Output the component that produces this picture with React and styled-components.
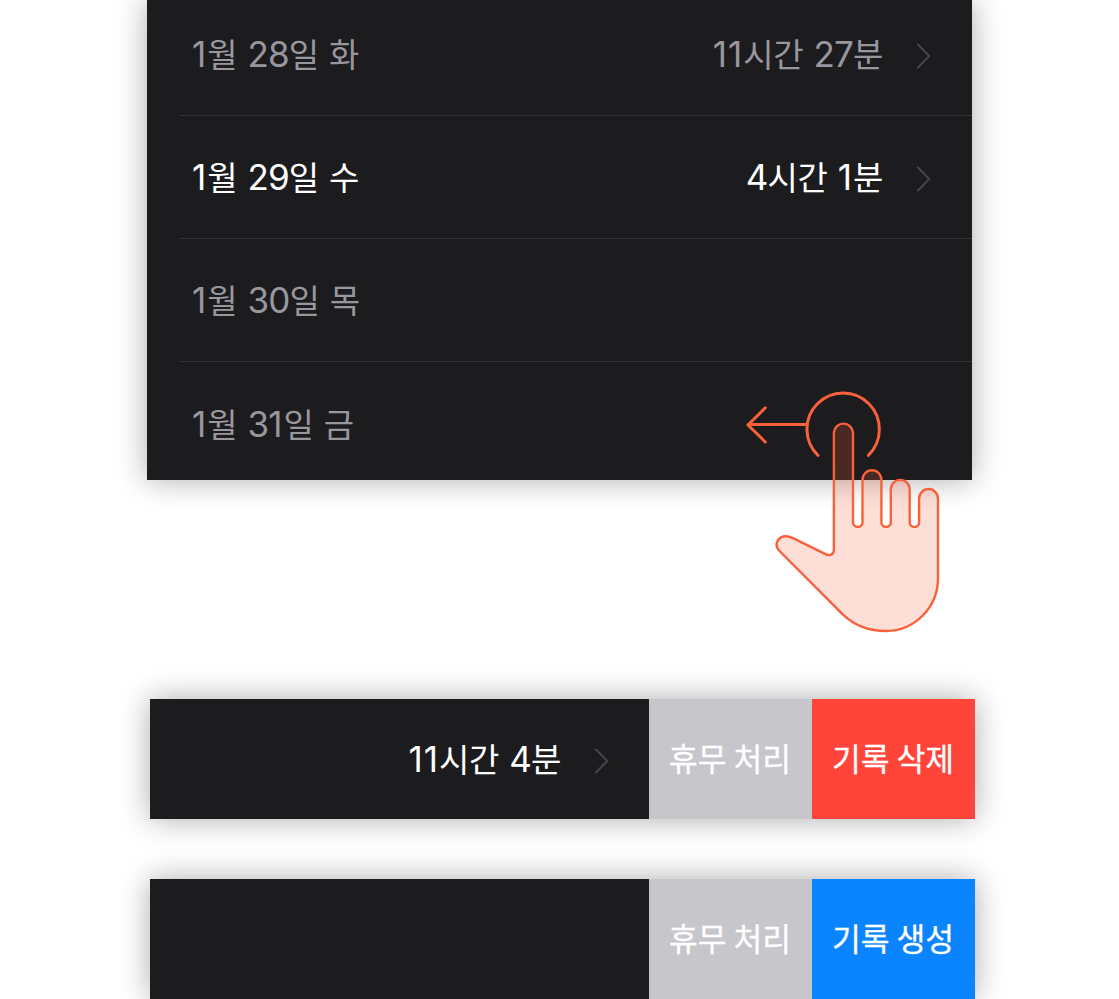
import React from "react";
import styled, { createGlobalStyle } from "styled-components";

const GlobalStyle = createGlobalStyle`
  body { margin: 0; background: #fff; overflow: hidden; }
  * { box-sizing: border-box; }
`;

const Page = styled.main`
  width: 1119px;
  height: 999px;
  overflow: hidden;
  display: flex;
  flex-direction: column;
  font-family: Inter, "Noto Sans CJK KR", sans-serif;
`;

const Panel = styled.section`
  position: relative;
  width: 825px;
  height: 480px;
  margin-left: 147px;
  background: #1c1c1e;
  box-shadow: 0 0 29px rgba(0, 0, 0, 0.33);
`;

const List = styled.div`
  height: 480px;
  overflow: hidden;
  display: flex;
  flex-direction: column;
  justify-content: flex-end;
  padding-left: 33px;
`;

const Row = styled.div`
  flex: 0 0 ${(p) => (p.$last ? 118 : 123)}px;
  display: flex;
  align-items: center;
  padding: ${(p) => (p.$last ? "7px" : "2px")} 41px 0 12px;
  border-bottom: ${(p) => (p.$last ? "none" : "1px solid #343436")};
  color: ${(p) => (p.$active ? "#fff" : "#98979e")};
`;

const Label = styled.span`
  display: flex;
  align-items: baseline;
  height: 52px;
  line-height: 48px;
  white-space: pre;
`;

const Digit = styled.span`
  font-family: Inter, sans-serif;
  font-size: 35px;
  letter-spacing: ${(p) => (p.$one ? "1px" : "-0.8px")};
`;

const Hangul = styled.span`
  font-family: "Noto Sans CJK KR", sans-serif;
  font-size: 33px;
  letter-spacing: -0.3px;
  word-spacing: 3px;
`;

const Duration = styled(Label)`
  margin-left: auto;
`;

const ChevronIcon = styled.svg`
  width: 16px;
  height: 28px;
  margin: 2px 0 0 32px;
  flex: none;
`;

const Bars = styled.div`
  display: flex;
  flex-direction: column;
  gap: 60px;
  margin: 219px 0 0 150px;
`;

const SwipeBar = styled.section`
  display: flex;
  width: 825px;
  height: 120px;
  box-shadow: 0 0 29px rgba(0, 0, 0, 0.33);
`;

const BarContent = styled.div`
  flex: 1;
  display: flex;
  align-items: center;
  padding: 1px 40px 0 0;
  background: #1c1c1e;
  color: #fff;
`;

const Action = styled.button`
  width: 163px;
  padding: 0 1px 2px 0;
  border: 0;
  background: ${(p) => p.$color};
  color: #fff;
  font: 400 31.3px/46px "Noto Sans CJK KR", sans-serif;
  -webkit-text-stroke: 0.3px #fff;
`;

const Gesture = styled.svg`
  position: absolute;
  left: 593px;
  top: 385px;
  width: 205px;
  height: 255px;
  z-index: 2;
`;

function Runs({ text }) {
  return text
    .split(/([0-9])/)
    .filter(Boolean)
    .map((part, i) =>
      /[0-9]/.test(part) ? (
        <Digit key={i} $one={part === "1"}>{part}</Digit>
      ) : (
        <Hangul key={i}>{part}</Hangul>
      )
    );
}

function Chevron() {
  return (
    <ChevronIcon viewBox="0 0 16 28" fill="none" stroke="#444447" strokeWidth="2.2" strokeLinecap="round" strokeLinejoin="round">
      <path d="M3 2.6 14.2 14 3 25.4" />
    </ChevronIcon>
  );
}

function SwipeGesture() {
  return (
    <Gesture viewBox="740 385 205 255" fill="none" stroke="#fa613a" strokeLinecap="round" strokeLinejoin="round">
      <path
        strokeWidth="2.4"
        fill="#fa613a"
        fillOpacity="0.2"
        d="M833.9 432.2a9.6 9.6 0 0 1 19.1 0V522.3a4.7 4.7 0 0 0 9.5 0V479.7a9.45 9.45 0 0 1 18.9 0V522.3a4.7 4.7 0 0 0 9.4 0V489.3a9.45 9.45 0 0 1 18.9 0V522.3a4.7 4.7 0 0 0 9.4 0V498.5a9.45 9.45 0 0 1 18.9 0V578C938 608 914 631 886 631C869 631 854 625 843 614.6L780 551.5C773 544.5 778 536 786.5 536.2Q790 536.6 793.5 538.3L826 554.3C830 556.3 833.9 554 833.9 550Z"
      />
      <path strokeWidth="3" d="M818 455.3A36.2 36.2 0 1 1 868.3 455.3" />
      <path strokeWidth="3" d="M807 424.5H748M765.3 407.8 748 425 765.3 442" />
    </Gesture>
  );
}

const days = [
  { date: "1월 28일 화", time: "11시간 27분" },
  { date: "1월 29일 수", time: "4시간 1분", active: true },
  { date: "1월 30일 목" },
  { date: "1월 31일 금" },
];

export default function App() {
  return (
    <Page>
      <GlobalStyle />
      <Panel>
        <List>
          {days.map((d, i) => (
            <Row key={d.date} $active={d.active} $last={i === days.length - 1}>
              <Label><Runs text={d.date} /></Label>
              {d.time && (
                <>
                  <Duration><Runs text={d.time} /></Duration>
                  <Chevron />
                </>
              )}
            </Row>
          ))}
        </List>
        <SwipeGesture />
      </Panel>
      <Bars>
        <SwipeBar>
          <BarContent>
            <Duration><Runs text="11시간 4분" /></Duration>
            <Chevron />
          </BarContent>
          <Action $color="#c7c6cb">휴무 처리</Action>
          <Action $color="#ff453a">기록 삭제</Action>
        </SwipeBar>
        <SwipeBar>
          <BarContent />
          <Action $color="#c7c6cb">휴무 처리</Action>
          <Action $color="#0a84ff">기록 생성</Action>
        </SwipeBar>
      </Bars>
    </Page>
  );
}
